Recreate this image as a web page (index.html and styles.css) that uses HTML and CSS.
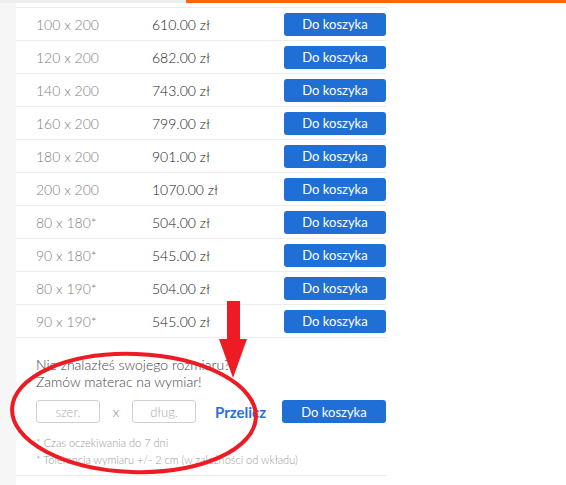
FILE: index.html
```html
<!DOCTYPE html>
<html lang="pl">
<head>
    <meta charset="UTF-8">
    <meta name="viewport" content="width=device-width, initial-scale=1.0">
    <title>Rozmiary materaca</title>
    <link rel="stylesheet" href="styles.css">
</head>
<body>

    <div class="topbar">
        <div class="topbar-gray"></div>
        <div class="topbar-orange"></div>
    </div>

    <div class="page">
        <div class="side"></div>
        <div class="content">
            <div class="sizes">
                <div class="size-row"><span class="size">100 x 200</span><span class="price">610.00 zł</span><button class="cart-btn">Do koszyka</button></div>
                <div class="size-row"><span class="size">120 x 200</span><span class="price">682.00 zł</span><button class="cart-btn">Do koszyka</button></div>
                <div class="size-row"><span class="size">140 x 200</span><span class="price">743.00 zł</span><button class="cart-btn">Do koszyka</button></div>
                <div class="size-row"><span class="size">160 x 200</span><span class="price">799.00 zł</span><button class="cart-btn">Do koszyka</button></div>
                <div class="size-row"><span class="size">180 x 200</span><span class="price">901.00 zł</span><button class="cart-btn">Do koszyka</button></div>
                <div class="size-row"><span class="size">200 x 200</span><span class="price">1070.00 zł</span><button class="cart-btn">Do koszyka</button></div>
                <div class="size-row"><span class="size">80 x 180*</span><span class="price">504.00 zł</span><button class="cart-btn">Do koszyka</button></div>
                <div class="size-row"><span class="size">90 x 180*</span><span class="price">545.00 zł</span><button class="cart-btn">Do koszyka</button></div>
                <div class="size-row"><span class="size">80 x 190*</span><span class="price">504.00 zł</span><button class="cart-btn">Do koszyka</button></div>
                <div class="size-row"><span class="size">90 x 190*</span><span class="price">545.00 zł</span><button class="cart-btn">Do koszyka</button></div>
            </div>

            <div class="custom">
                <p class="custom-title">Nie znalazłeś swojego rozmiaru?<br>Zamów materac na wymiar!</p>
                <div class="custom-form">
                    <input class="dim-input" type="text" placeholder="szer.">
                    <span class="times">x</span>
                    <input class="dim-input" type="text" placeholder="dług.">
                    <a class="calc-link" href="#">Przelicz</a>
                    <button class="cart-btn wide">Do koszyka</button>
                </div>
                <p class="note">* Czas oczekiwania do 7 dni<br>* Tolerancja wymiaru +/- 2 cm (w zależności od wkładu)</p>
            </div>
        </div>
    </div>

    <!-- red annotation drawn over the page -->
    <svg class="annotation" width="566" height="485" viewBox="0 0 566 485">
        <ellipse cx="134" cy="413" rx="122" ry="59" fill="none" stroke="#ed1c24" stroke-width="4" transform="rotate(2 134 413)"/>
        <rect x="227" y="301" width="13" height="39" fill="#ed1c24"/>
        <polygon points="219,339 247,339 233,378" fill="#ed1c24"/>
    </svg>

</body>
</html>
```

FILE: styles.css
```css
body {
    margin: 0;
    font-family: Lato, "Open Sans", sans-serif;
    background-color: #fff;
    position: relative;
    width: 566px;
    height: 485px;
    overflow: hidden;
}
.topbar {
    display: flex;
    height: 3px;
}
.topbar-gray {
    width: 186px;
    background-color: #eceef0;
}
.topbar-orange {
    flex: 1;
    background-color: #ff6600;
}
.page {
    display: flex;
    height: 482px;
}
.side {
    width: 16px;
    background-color: #f6f6f6;
}
.content {
    width: 370px;
    padding-top: 4px;
}
.sizes {
    border-bottom: 1px solid #ececec;
}
.size-row {
    display: flex;
    align-items: center;
    height: 32px;
    border-top: 1px solid #ececec;
    padding-left: 20px;
    font-size: 14px;
}
.size {
    width: 116px;
    color: #808080;
    font-weight: 300;
}
.price {
    flex: 1;
    color: #222;
    font-weight: 300;
}
.cart-btn {
    width: 102px;
    height: 23px;
    border: none;
    border-radius: 3px;
    background-color: #1f6fd6;
    color: #fff;
    font-family: Lato, sans-serif;
    font-size: 13px;
    padding: 0;
    cursor: pointer;
}
.cart-btn.wide {
    width: 104px;
}
.custom {
    padding: 18px 0 7px 20px;
    border-bottom: 1px solid #ececec;
}
.custom-title {
    margin: 0;
    font-size: 14px;
    font-weight: 300;
    line-height: 17px;
    color: #444;
}
.custom-form {
    display: flex;
    align-items: center;
    margin-top: 10px;
}
.dim-input {
    width: 64px;
    height: 23px;
    box-sizing: border-box;
    border: 1px solid #d0d0d0;
    border-radius: 3px;
    text-align: center;
    font-family: Lato, sans-serif;
    font-size: 13px;
    font-weight: 300;
    padding: 0;
}
.dim-input::placeholder {
    color: #aaa;
}
.times {
    width: 32px;
    text-align: center;
    color: #888;
    font-size: 14px;
    font-weight: 300;
}
.calc-link {
    margin-left: 19px;
    color: #2a6fd3;
    font-weight: bold;
    font-size: 15px;
    text-decoration: none;
    flex: 1;
}
.note {
    margin: 11px 0 0;
    font-size: 11px;
    font-weight: 300;
    line-height: 17px;
    color: #999;
}
.annotation {
    position: absolute;
    left: 0;
    top: 0;
    pointer-events: none;
}
```
